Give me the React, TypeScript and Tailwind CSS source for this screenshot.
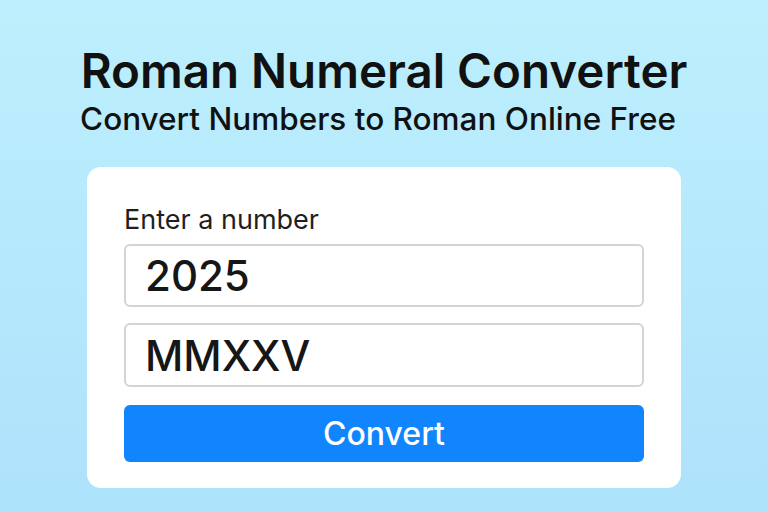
export default function App() {
  return (
    <div className="w-[768px] h-[512px] overflow-hidden bg-gradient-to-b from-[#bdeffd] to-[#ade2fb] font-['Inter','Liberation_Sans',sans-serif] text-[#111111]">
      {/* Header */}
      <div className="pt-[44px] flex flex-col items-center">
        <h1 className="text-[47.5px] leading-[54px] font-semibold">
          Roman Numeral Converter
        </h1>
        <p className="mt-[2px] ml-[-12px] text-[31.5px] leading-[38px] font-medium">
          Convert Numbers to Roman Online Free
        </p>
      </div>

      {/* Card */}
      <div className="mt-[29px] ml-[87px] w-[594px] h-[321px] bg-white rounded-[14px] px-[37px] pt-[33px]">
        <label className="block text-[27px] leading-[40px] text-[#1f1f1f]">Enter a number</label>
        <div className="mt-[4px] h-[63px] rounded-[6px] border-2 border-[#d4d4d4] flex items-center px-[19px]">
          <span className="text-[42px] font-medium text-[#161616]">2025</span>
        </div>
        <div className="mt-[16px] h-[64px] rounded-[6px] border-2 border-[#d4d4d4] flex items-center px-[19px]">
          <span className="text-[42px] font-medium text-[#161616]">MMXXV</span>
        </div>
        <button className="mt-[18px] w-full h-[57px] rounded-[6px] bg-[#1185fd] text-white text-[32px] font-medium flex items-center justify-center">
          Convert
        </button>
      </div>
    </div>
  );
}
